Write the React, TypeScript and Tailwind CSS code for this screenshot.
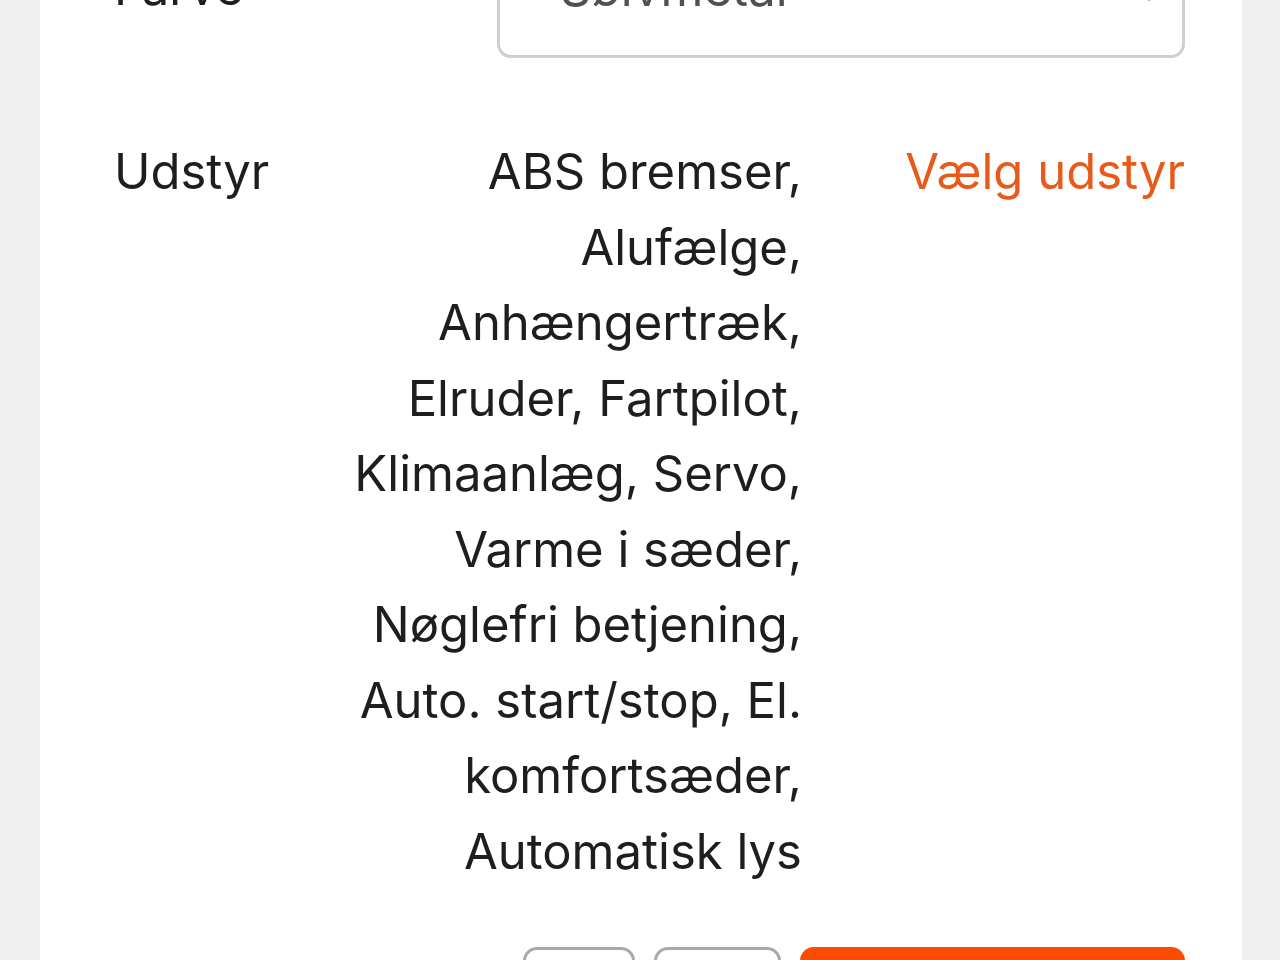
import React from 'react';
import { ChevronDown } from 'lucide-react';

const equipmentLines = [
  'ABS bremser,',
  'Alufælge,',
  'Anhængertræk,',
  'Elruder, Fartpilot,',
  'Klimaanlæg, Servo,',
  'Varme i sæder,',
  'Nøglefri betjening,',
  'Auto. start/stop, El.',
  'komfortsæder,',
  'Automatisk lys',
];

const App: React.FC = () => {
  return (
    <div className="min-h-screen bg-[#f0f0f0] pl-[40px] pr-[38px] overflow-hidden" style={{ fontFamily: 'Inter, "Noto Sans", sans-serif' }}>
      <div className="bg-white pl-[74px] pr-[57px] -mt-[62px] pb-10 text-[#1e1e1e] text-[49px] leading-[75.5px]">
        {/* Farve */}
        <div className="flex items-start">
          <div className="w-[383px] shrink-0 pt-[12px]">Farve</div>
          <div className="flex-1 relative h-[120px] border-[3px] border-[#cfcfcf] rounded-[14px] flex items-start pl-[60px] pt-[10px] text-[#505050]">
            <span>Sølvmetal</span>
            <ChevronDown className="absolute right-[20px] top-[42px] w-[26px] h-[26px] text-[#555]" strokeWidth={2.5} />
          </div>
        </div>

        {/* Udstyr */}
        <div className="flex items-start mt-[76px]">
          <div className="shrink-0">Udstyr</div>
          <div className="flex-1 text-right">
            {equipmentLines.map((l) => (
              <div key={l}>{l}</div>
            ))}
          </div>
          <button className="ml-[98px] w-[285px] shrink-0 text-right text-[#e8591a] whitespace-nowrap">Vælg udstyr</button>
        </div>

        {/* Buttons */}
        <div className="flex justify-end gap-[19px] mt-[58px]">
          <button className="w-[112px] h-[90px] border-[3px] border-[#a9a9a9] rounded-[14px] bg-white" />
          <button className="w-[127px] h-[90px] border-[3px] border-[#a9a9a9] rounded-[14px] bg-white" />
          <button className="w-[385px] h-[90px] rounded-[14px] bg-[#fc4c00]" />
        </div>
      </div>
    </div>
  );
};

export default App;
